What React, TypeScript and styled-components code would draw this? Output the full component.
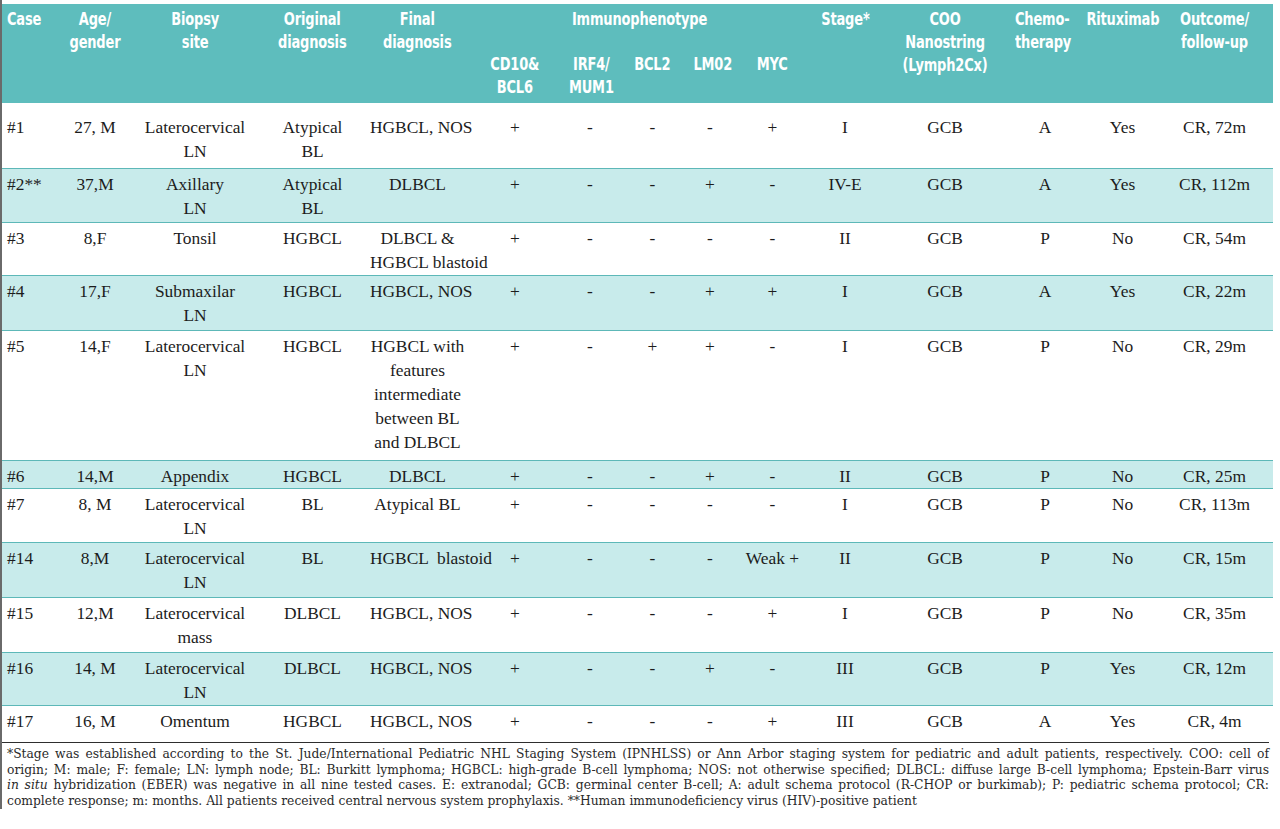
import React from "react";
import styled, { createGlobalStyle } from "styled-components";

const GlobalStyle = createGlobalStyle`
  html, body {
    margin: 0;
    padding: 0;
    background: #ffffff;
  }
`;

type Align = "left" | "center";

interface ColumnDef {
  width: number;
  align?: Align;
  headAlign?: Align;
  padLeft?: number;
  padRight?: number;
}

const columns: ColumnDef[] = [
  { width: 53, align: "left", headAlign: "left", padLeft: 5 },
  { width: 80 },
  { width: 120 },
  { width: 115 },
  { width: 95 },
  { width: 100 },
  { width: 50 },
  { width: 75 },
  { width: 40 },
  { width: 85 },
  { width: 60 },
  { width: 140 },
  { width: 60, headAlign: "left" },
  { width: 95 },
  { width: 103, padRight: 14 },
];

interface CaseRow {
  cells: string[];
  shaded?: boolean;
  padTop?: number;
  padBottom?: number;
}

const rows: CaseRow[] = [
  {
    cells: ["#1", "27, M", "Laterocervical\nLN", "Atypical\nBL", "HGBCL, NOS", "+", "-", "-", "-", "+", "I", "GCB", "A", "Yes", "CR, 72m"],
    padTop: 12,
    padBottom: 5,
  },
  {
    cells: ["#2**", "37,M", "Axillary\nLN", "Atypical\nBL", "DLBCL", "+", "-", "-", "+", "-", "IV-E", "GCB", "A", "Yes", "CR, 112m"],
    shaded: true,
  },
  {
    cells: ["#3", "8,F", "Tonsil", "HGBCL", "DLBCL &\nHGBCL blastoid", "+", "-", "-", "-", "-", "II", "GCB", "P", "No", "CR, 54m"],
    padBottom: 1,
  },
  {
    cells: ["#4", "17,F", "Submaxilar\nLN", "HGBCL", "HGBCL, NOS", "+", "-", "-", "+", "+", "I", "GCB", "A", "Yes", "CR, 22m"],
    shaded: true,
    padBottom: 3,
  },
  {
    cells: [
      "#5",
      "14,F",
      "Laterocervical\nLN",
      "HGBCL",
      "HGBCL with\nfeatures\nintermediate\nbetween BL\nand DLBCL",
      "+",
      "-",
      "+",
      "+",
      "-",
      "I",
      "GCB",
      "P",
      "No",
      "CR, 29m",
    ],
    padBottom: 6,
  },
  {
    cells: ["#6", "14,M", "Appendix", "HGBCL", "DLBCL", "+", "-", "-", "+", "-", "II", "GCB", "P", "No", "CR, 25m"],
    shaded: true,
    padBottom: 0,
  },
  {
    cells: ["#7", "8, M", "Laterocervical\nLN", "BL", "Atypical BL", "+", "-", "-", "-", "-", "I", "GCB", "P", "No", "CR, 113m"],
  },
  {
    cells: ["#14", "8,M", "Laterocervical\nLN", "BL", "HGBCL  blastoid", "+", "-", "-", "-", "Weak +", "II", "GCB", "P", "No", "CR, 15m"],
    shaded: true,
    padBottom: 3,
  },
  {
    cells: ["#15", "12,M", "Laterocervical\nmass", "DLBCL", "HGBCL, NOS", "+", "-", "-", "-", "+", "I", "GCB", "P", "No", "CR, 35m"],
    padBottom: 3,
  },
  {
    cells: ["#16", "14, M", "Laterocervical\nLN", "DLBCL", "HGBCL, NOS", "+", "-", "-", "+", "-", "III", "GCB", "P", "Yes", "CR, 12m"],
    shaded: true,
    padBottom: 1,
  },
  {
    cells: ["#17", "16, M", "Omentum", "HGBCL", "HGBCL, NOS", "+", "-", "-", "-", "+", "III", "GCB", "A", "Yes", "CR, 4m"],
    padBottom: 9,
  },
];

const topHeads = [
  "Case",
  "Age/\ngender",
  "Biopsy\nsite",
  "Original\ndiagnosis",
  "Final\ndiagnosis",
];

const tailHeads = [
  "Stage*",
  "COO\nNanostring\n(Lymph2Cx)",
  "Chemo-\ntherapy",
  "Rituximab",
  "Outcome/\nfollow-up",
];

const markerHeads = ["CD10&\nBCL6", "IRF4/\nMUM1", "BCL2", "LM02", "MYC"];

const Page = styled.div`
  width: 1273px;
  padding-top: 4px;
  border-left: 2px solid #6a6a6a;
`;

const Table = styled.table`
  width: 1271px;
  border-collapse: collapse;
  table-layout: fixed;
`;

const Col = styled.col<{ $w: number }>`
  width: ${(p) => p.$w}px;
`;

const HeadRow = styled.tr<{ $h: number }>`
  height: ${(p) => p.$h}px;
  background: #5ebdbd;
`;

const HeadCell = styled.th<{ $align?: Align; $padTop?: number; $padLeft?: number; $padRight?: number }>`
  font-family: "Liberation Sans Narrow", "Arial Narrow", "DejaVu Sans Condensed", sans-serif;
  font-weight: 700;
  font-size: 17px;
  line-height: 23px;
  color: #ffffff;
  text-align: ${(p) => p.$align ?? "center"};
  vertical-align: top;
  white-space: pre;
  padding: ${(p) => p.$padTop ?? 0}px ${(p) => p.$padRight ?? 0}px 0 ${(p) => p.$padLeft ?? 0}px;
`;

/* the printed header face is a tall condensed grotesque: squeeze the condensed sans a bit more */
const HeadText = styled.span<{ $align?: Align }>`
  display: inline-block;
  transform: scaleX(0.85);
  transform-origin: ${(p) => (p.$align === "left" ? "left" : "center")} top;
  letter-spacing: -0.2px;
`;

const BodyRow = styled.tr<{ $shaded?: boolean; $padTop: number; $padBottom: number }>`
  background: ${(p) => (p.$shaded ? "#c8ebeb" : "#ffffff")};

  & + & {
    border-top: 1px solid #5db8b8;
  }

  td {
    padding-top: ${(p) => p.$padTop}px;
    padding-bottom: ${(p) => p.$padBottom}px;
  }
`;

const Cell = styled.td<{ $align?: Align; $padLeft?: number; $padRight?: number }>`
  font-family: "Liberation Serif", "Times New Roman", serif;
  font-size: 17.4px;
  line-height: 24px;
  color: #1c1c1c;
  text-align: ${(p) => p.$align ?? "center"};
  vertical-align: top;
  white-space: pre;
  padding-left: ${(p) => p.$padLeft ?? 0}px;
  padding-right: ${(p) => p.$padRight ?? 0}px;
`;

const Footnote = styled.div`
  border-top: 1px solid #2e2e2e;
  padding: 4px 0 0 5px;
  width: 1262px;
  font-family: "DejaVu Serif", "Liberation Serif", serif;
  font-size: 12.3px;
  line-height: 15.6px;
  color: #2a2a2a;
`;

const FootLine = styled.div<{ $last?: boolean }>`
  white-space: nowrap;
  text-align: justify;
  text-align-last: ${(p) => (p.$last ? "left" : "justify")};
`;

const App: React.FC = () => {
  return (
    <>
      <GlobalStyle />
      <Page>
        <Table>
          <colgroup>
            {columns.map((c, i) => (
              <Col key={i} $w={c.width} />
            ))}
          </colgroup>
          <thead>
            <HeadRow $h={49}>
              {topHeads.map((h, i) => (
                <HeadCell
                  key={h}
                  rowSpan={2}
                  $padTop={4}
                  $align={columns[i].headAlign}
                  $padLeft={columns[i].padLeft}
                >
                  <HeadText $align={columns[i].headAlign}>{h}</HeadText>
                </HeadCell>
              ))}
              <HeadCell colSpan={5} $padTop={4}>
                <HeadText>Immunophenotype</HeadText>
              </HeadCell>
              {tailHeads.map((h, i) => {
                const c = columns[10 + i];
                return (
                  <HeadCell
                    key={h}
                    rowSpan={2}
                    $padTop={4}
                    $align={c.headAlign}
                    $padRight={c.padRight}
                  >
                    <HeadText $align={c.headAlign}>{h}</HeadText>
                  </HeadCell>
                );
              })}
            </HeadRow>
            <HeadRow $h={50}>
              {markerHeads.map((h) => (
                <HeadCell key={h}>
                  <HeadText>{h}</HeadText>
                </HeadCell>
              ))}
            </HeadRow>
          </thead>
          <tbody>
            {rows.map((r) => (
              <BodyRow
                key={r.cells[0]}
                $shaded={r.shaded}
                $padTop={r.padTop ?? 3}
                $padBottom={r.padBottom ?? 2}
              >
                {r.cells.map((v, i) => (
                  <Cell
                    key={i}
                    $align={columns[i].align}
                    $padLeft={columns[i].padLeft}
                    $padRight={columns[i].padRight}
                  >
                    {v}
                  </Cell>
                ))}
              </BodyRow>
            ))}
          </tbody>
        </Table>
        <Footnote>
          <FootLine>
            *Stage was established according to the St. Jude/International Pediatric NHL Staging System (IPNHLSS) or
            Ann Arbor staging system for pediatric and adult patients, respectively. COO: cell of
          </FootLine>
          <FootLine>
            origin; M: male; F: female; LN: lymph node; BL: Burkitt lymphoma; HGBCL: high-grade B-cell lymphoma; NOS:
            not otherwise specified; DLBCL: diffuse large B-cell lymphoma; Epstein-Barr virus
          </FootLine>
          <FootLine>
            <i>in situ</i> hybridization (EBER) was negative in all nine tested cases. E: extranodal; GCB: germinal
            center B-cell; A: adult schema protocol (R-CHOP or burkimab); P: pediatric schema protocol; CR:
          </FootLine>
          <FootLine $last>
            complete response; m: months. All patients received central nervous system prophylaxis. **Human
            immunodeficiency virus (HIV)-positive patient
          </FootLine>
        </Footnote>
      </Page>
    </>
  );
};

export default App;
